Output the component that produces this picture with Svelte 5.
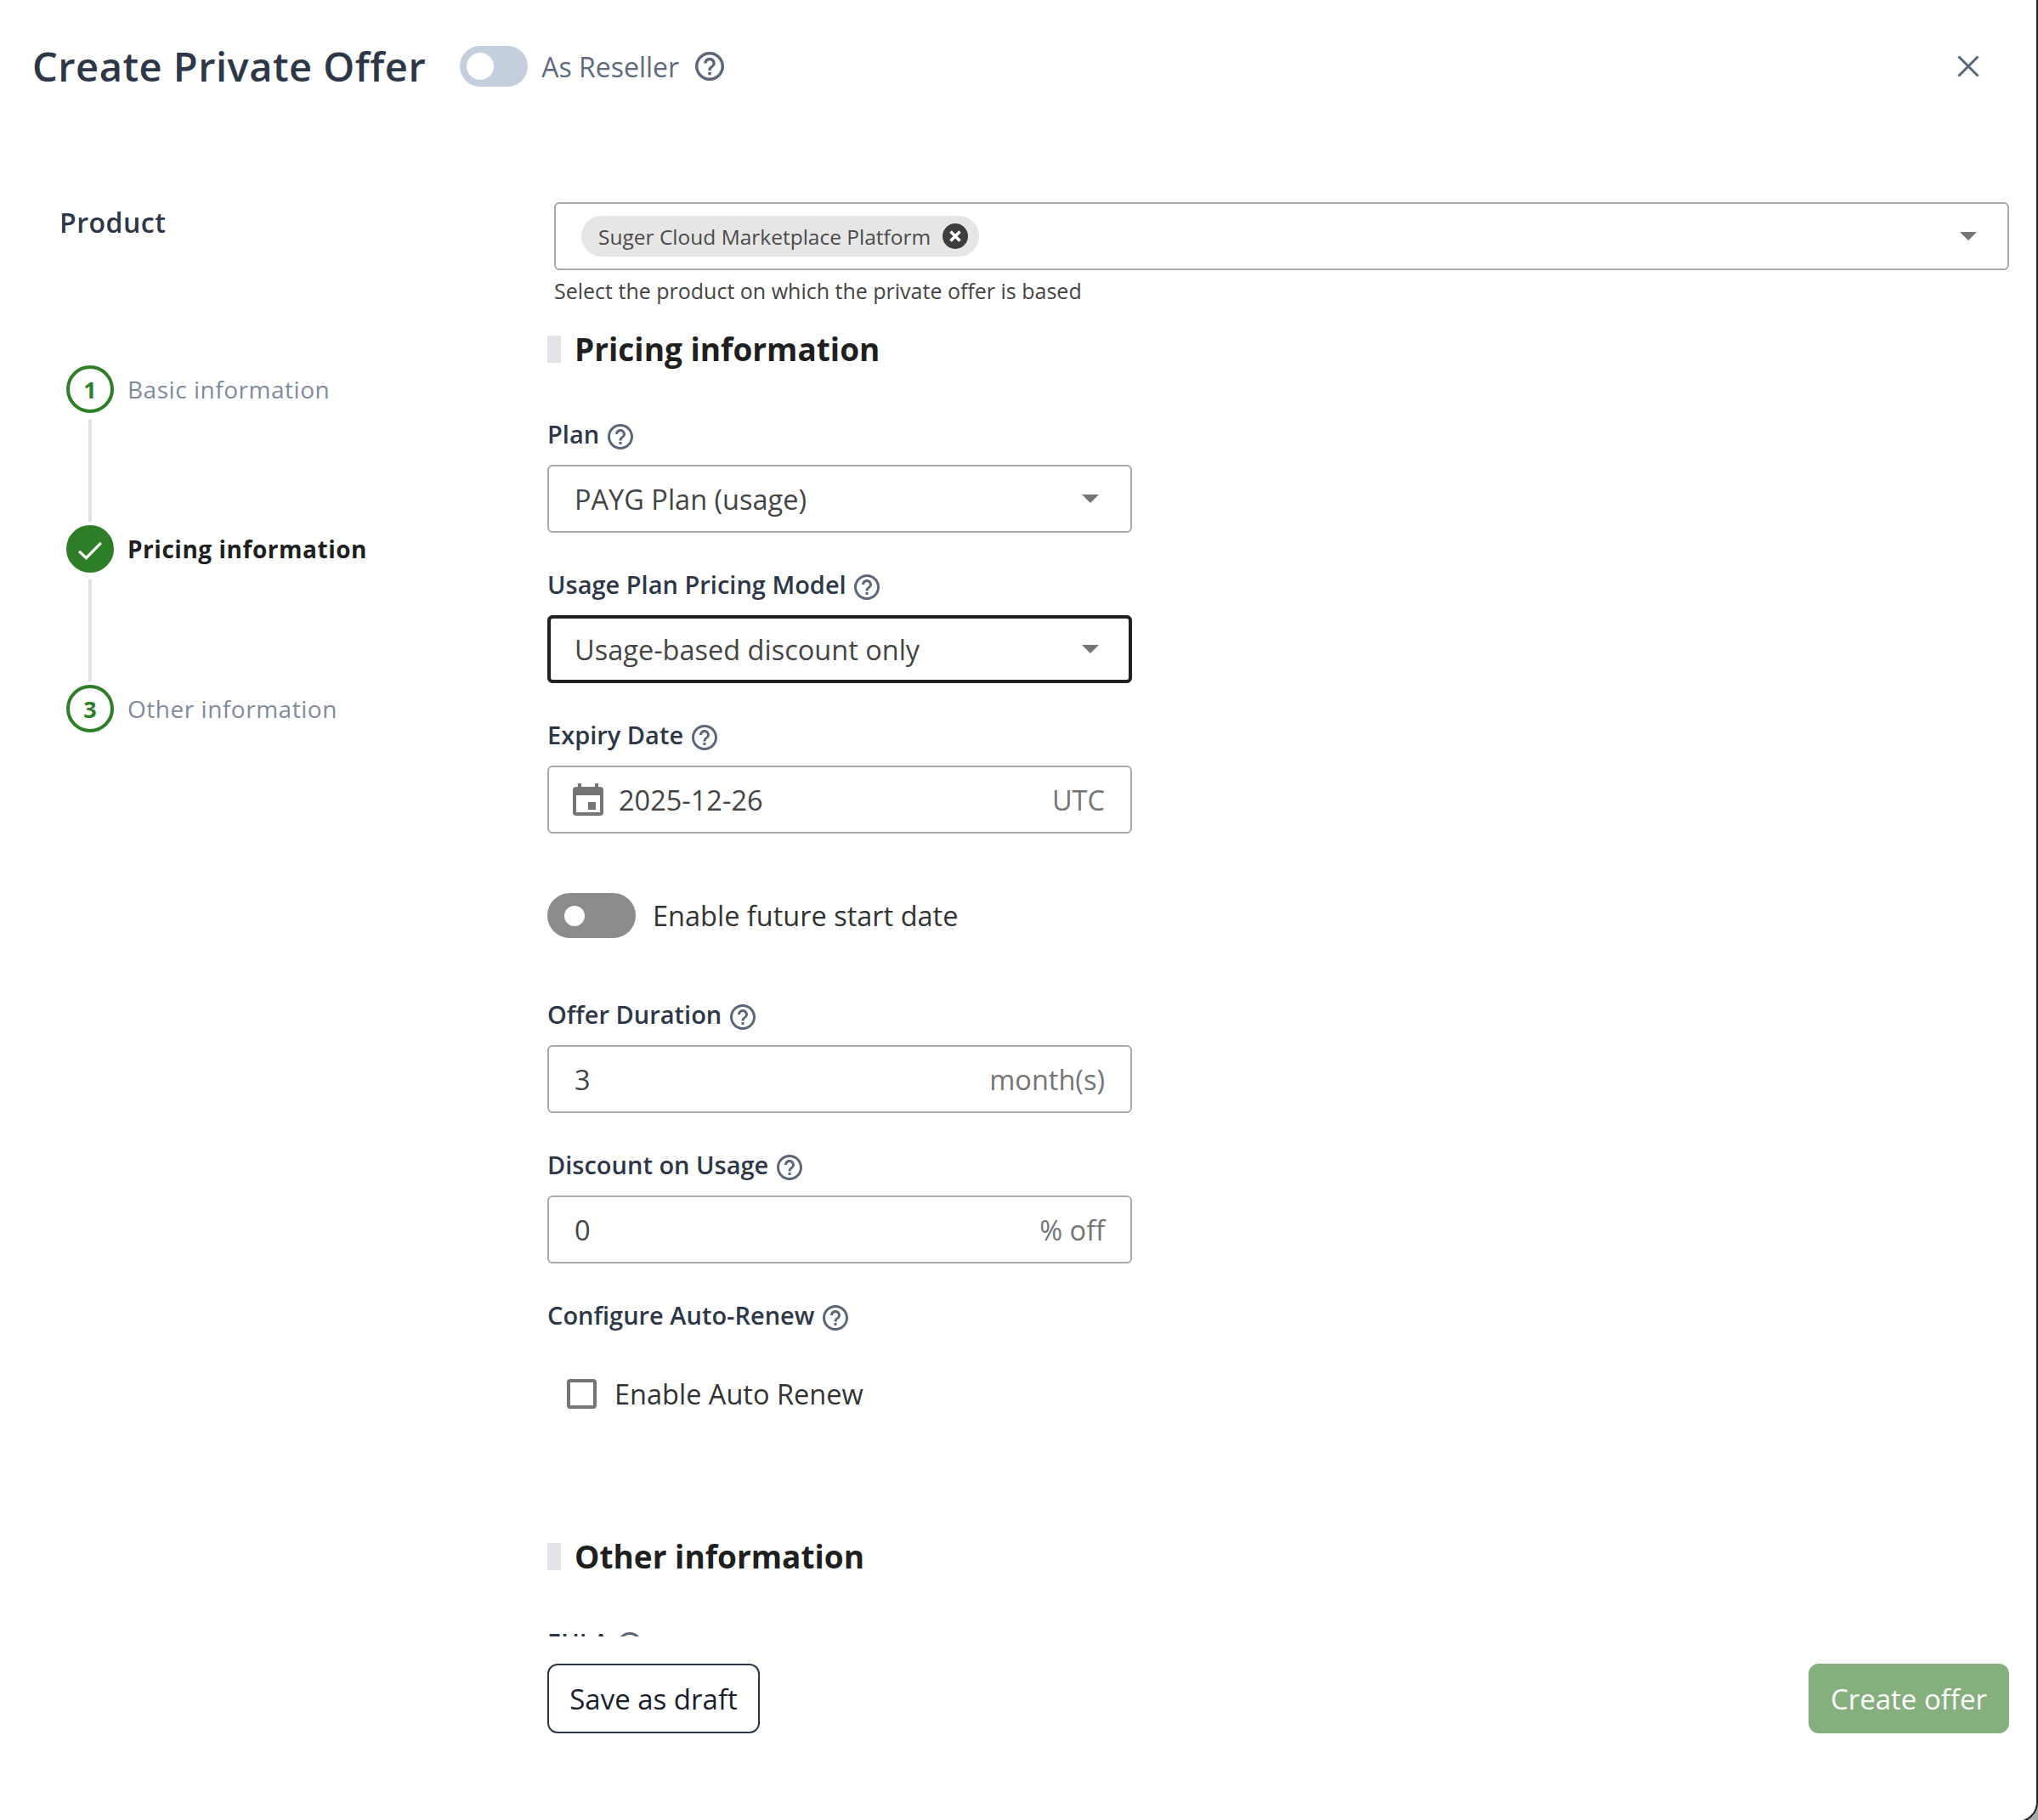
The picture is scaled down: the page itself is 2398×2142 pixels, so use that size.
<script>
  const steps = [
    { label: 'Basic information', n: 1 },
    { label: 'Pricing information', done: true },
    { label: 'Other information', n: 3 }
  ]
</script>

{#snippet help(cls = '')}
  <svg class="help {cls}" viewBox="2 2 20 20" aria-hidden="true">
    <path d="M11 18h2v-2h-2v2zm1-16C6.48 2 2 6.48 2 12s4.48 10 10 10 10-4.48 10-10S17.52 2 12 2zm0 18c-4.41 0-8-3.59-8-8s3.59-8 8-8 8 3.59 8 8-3.59 8-8 8zm0-14c-2.21 0-4 1.79-4 4h2c0-1.1.9-2 2-2s2 .9 2 2c0 2-3 1.75-3 5h2c0-2.25 3-2.5 3-5 0-2.21-1.79-4-4-4z" />
  </svg>
{/snippet}

{#snippet caret()}
  <svg class="caret" viewBox="0 0 20 10" aria-hidden="true"><path d="M0 0h20L10 10z" /></svg>
{/snippet}

<div class="dialog">
  <header>
    <h1>Create Private Offer</h1>
    <span class="reseller-toggle"><span class="knob"></span></span>
    <span class="reseller">As Reseller</span>
    {@render help('big')}
    <svg class="close" viewBox="0 0 26 26" aria-hidden="true"><path d="M1.5 1.5l23 23M24.5 1.5l-23 23" /></svg>
  </header>

  <div class="product-row">
    <div class="product-label">Product</div>
    <div class="product-field">
      <div class="product-select">
        <span class="chip">
          Suger Cloud Marketplace Platform
          <svg viewBox="0 0 30 30" aria-hidden="true">
            <circle cx="15" cy="15" r="15" />
            <path d="M9.500 9.500l11 11M20.500 9.500l-11 11" />
          </svg>
        </span>
        {@render caret()}
      </div>
      <div class="hint">Select the product on which the private offer is based</div>
    </div>
  </div>

  <div class="body">
    <nav class="stepper">
      {#each steps as step, i}
        {#if i > 0}<div class="connector"></div>{/if}
        <div class="step" class:active={step.done}>
          {#if step.done}
            <span class="dot-step filled">
              <svg viewBox="0 0 30 24" aria-hidden="true"><path d="M1 13l9 8.500L29 2" /></svg>
            </span>
          {:else}
            <span class="dot-step">{step.n}</span>
          {/if}
          <span class="step-label">{step.label}</span>
        </div>
      {/each}
    </nav>

    <main class="form">
      <h2 class="section">Pricing information</h2>

      <div class="label first">Plan {@render help()}</div>
      <div class="box select"><span>PAYG Plan (usage)</span>{@render caret()}</div>

      <div class="label">Usage Plan Pricing Model {@render help()}</div>
      <div class="box select focused"><span>Usage-based discount only</span>{@render caret()}</div>

      <div class="label">Expiry Date {@render help()}</div>
      <div class="box date">
        <svg class="calendar" viewBox="0 0 36 38" aria-hidden="true">
          <path d="M6 0h4v4h16V0h4v4h2a4 4 0 0 1 4 4v26a4 4 0 0 1-4 4H4a4 4 0 0 1-4-4V8a4 4 0 0 1 4-4h2zM4 14v20h28V14z" />
          <rect x="18" y="22" width="9" height="9" />
        </svg>
        <span>2025-12-26</span>
        <span class="suffix">UTC</span>
      </div>

      <div class="future">
        <span class="grey-toggle"><span class="knob"></span></span>
        <span>Enable future start date</span>
      </div>

      <div class="label">Offer Duration {@render help()}</div>
      <div class="box"><span>3</span><span class="suffix">month(s)</span></div>

      <div class="label">Discount on Usage {@render help()}</div>
      <div class="box"><span>0</span><span class="suffix">% off</span></div>

      <div class="label">Configure Auto-Renew {@render help()}</div>
      <div class="check-row">
        <span class="checkbox"></span>
        <span>Enable Auto Renew</span>
      </div>

      <h2 class="section other">Other information</h2>
      <div class="label eula">EULA {@render help()}</div>
    </main>
  </div>

  <footer>
    <button class="draft">Save as draft</button>
    <button class="create">Create offer</button>
  </footer>
</div>

<style>
  :global(body) {
    margin: 0;
    background: #a9a9a9;
    height: 100vh;
    overflow: hidden;
  }

  .dialog {
    width: 2398px;
    height: 2145px;
    background: #fff;
    border-right: 2px solid #222;
    border-bottom: 2px solid #222;
    border-bottom-right-radius: 24px;
    box-sizing: border-box;
    display: flex;
    flex-direction: column;
    overflow: hidden;
    font-family: 'Open Sans', 'Noto Sans', sans-serif;
    color: #2d3748;
  }

  header {
    display: flex;
    align-items: center;
    height: 156px;
    padding-left: 38px;
    flex-shrink: 0;
  }

  h1 {
    margin: 0;
    font-size: 47px;
    font-weight: 600;
    color: #2d3748;
    letter-spacing: 0.5px;
  }

  .reseller-toggle {
    width: 80px;
    height: 48px;
    border-radius: 24px;
    background: #c3cfdd;
    margin-left: 40px;
    display: flex;
    align-items: center;
    padding-left: 8px;
    box-sizing: border-box;
  }

  .reseller-toggle .knob {
    width: 32px;
    height: 32px;
    border-radius: 50%;
    background: #fff;
  }

  .reseller {
    margin-left: 16px;
    font-size: 32px;
    color: #5f6b7d;
  }

  .close {
    width: 26px;
    height: 26px;
    margin-left: auto;
    margin-right: 67px;
    fill: none;
    stroke: #56667d;
    stroke-width: 3;
  }

  .help {
    width: 30px;
    height: 30px;
    margin-left: 2px;
    fill: #5b6679;
    vertical-align: -7px;
    flex-shrink: 0;
  }

  .help.big {
    width: 34px;
    height: 34px;
    margin-left: 19px;
  }

  .product-row {
    display: flex;
    padding-top: 82px;
    flex-shrink: 0;
  }

  .product-label {
    width: 652px;
    padding-left: 70px;
    box-sizing: border-box;
    font-size: 32px;
    font-weight: 600;
    line-height: 48px;
    color: #2d3748;
    letter-spacing: 0.5px;
  }

  .product-field {
    width: 1712px;
  }

  .product-select {
    height: 80px;
    box-sizing: border-box;
    border: 2px solid #aaa;
    border-radius: 6px;
    display: flex;
    align-items: center;
    justify-content: space-between;
    padding: 0 36px 0 30px;
  }

  .chip {
    display: flex;
    align-items: center;
    height: 48px;
    background: #e6e6e6;
    border-radius: 24px;
    padding: 0 13px 0 20px;
    font-size: 24.5px;
    color: #4a4a4a;
    gap: 14px;
  }

  .chip svg {
    width: 30px;
    height: 30px;
  }

  .chip circle {
    fill: #3d3d3d;
  }

  .chip path {
    stroke: #fff;
    stroke-width: 3.5;
    fill: none;
  }

  .hint {
    margin-top: 7px;
    font-size: 25px;
    line-height: 34px;
    color: #444;
  }

  .caret {
    width: 20px;
    height: 10px;
    fill: #757575;
    flex-shrink: 0;
  }

  .body {
    display: flex;
    height: 1567px;
    flex-shrink: 0;
    overflow: hidden;
  }

  .stepper {
    width: 644px;
    flex-shrink: 0;
    padding: 71px 0 0 78px;
    box-sizing: border-box;
  }

  .step {
    display: flex;
    align-items: center;
    gap: 16px;
    height: 56px;
  }

  .dot-step {
    width: 56px;
    height: 56px;
    box-sizing: border-box;
    border: 4px solid #2e7d27;
    border-radius: 50%;
    color: #2e7d27;
    font-size: 27px;
    font-weight: 700;
    display: flex;
    align-items: center;
    justify-content: center;
  }

  .dot-step.filled {
    background: #2e7d27;
  }

  .dot-step svg {
    width: 28px;
    height: 22px;
    margin-top: 4px;
    fill: none;
    stroke: #fff;
    stroke-width: 3.5;
  }

  .step-label {
    font-size: 28px;
    color: #7f8b9d;
    letter-spacing: 0.53px;
  }

  .step.active .step-label {
    font-weight: 700;
    color: #1f1f1f;
  }

  .connector {
    width: 4px;
    height: 120px;
    background: #dce3ed;
    margin: 8px 0 4px 26px;
  }

  .form {
    width: 688px;
    padding-top: 27px;
  }

  .section {
    margin: 0;
    display: flex;
    align-items: center;
    gap: 16px;
    font-size: 37px;
    font-weight: 700;
    line-height: 50px;
    color: #1f1f1f;
  }

  .section::before {
    content: '';
    width: 16px;
    height: 32px;
    background: #e2e3e9;
  }

  .section.other {
    margin-top: 144px;
  }

  .label {
    margin-top: 41px;
    font-size: 29px;
    font-weight: 600;
    line-height: 40px;
    margin-bottom: 16px;
    color: #2d3748;
    white-space: nowrap;
  }

  .label.first {
    margin-top: 55px;
  }

  .label.eula {
    margin-top: 56px;
  }

  .box {
    height: 80px;
    box-sizing: border-box;
    border: 2px solid #aaa;
    border-radius: 6px;
    display: flex;
    align-items: center;
    justify-content: space-between;
    padding: 0 30px;
    font-size: 32.5px;
    color: #444;
  }

  .box.select {
    padding-right: 37px;
  }

  .box.focused {
    border: 4px solid #1f1f1f;
    padding: 0 35px 0 28px;
  }

  .box.date {
    justify-content: flex-start;
    gap: 18px;
    padding-left: 28px;
  }

  .calendar {
    width: 36px;
    height: 38px;
    fill: #757575;
    fill-rule: evenodd;
  }

  .suffix {
    color: #757575;
    margin-left: auto;
  }

  .future {
    display: flex;
    align-items: center;
    gap: 20px;
    margin-top: 70px;
    margin-bottom: 70px;
    font-size: 32.5px;
    color: #333;
  }

  .grey-toggle {
    width: 104px;
    height: 53px;
    border-radius: 27px;
    background: #8c8c8c;
    display: flex;
    align-items: center;
    padding-left: 20px;
    box-sizing: border-box;
  }

  .grey-toggle .knob {
    width: 24px;
    height: 24px;
    border-radius: 50%;
    background: #fff;
  }

  .check-row {
    display: flex;
    align-items: center;
    gap: 21px;
    padding-left: 23px;
    margin-top: 50px;
    font-size: 32.5px;
    color: #333;
  }

  .checkbox {
    width: 35px;
    height: 35px;
    box-sizing: border-box;
    border: 4px solid #757575;
    border-radius: 4px;
  }

  footer {
    display: flex;
    justify-content: space-between;
    padding: 32px 32px 0 644px;
  }

  button {
    height: 82px;
    border-radius: 12px;
    font-family: inherit;
    font-size: 33px;
    box-sizing: border-box;
  }

  .draft {
    width: 250px;
    background: #fff;
    border: 2px solid #2d3748;
    color: #1a202c;
  }

  .create {
    width: 236px;
    background: #85b07e;
    border: none;
    color: #fff;
  }
</style>
